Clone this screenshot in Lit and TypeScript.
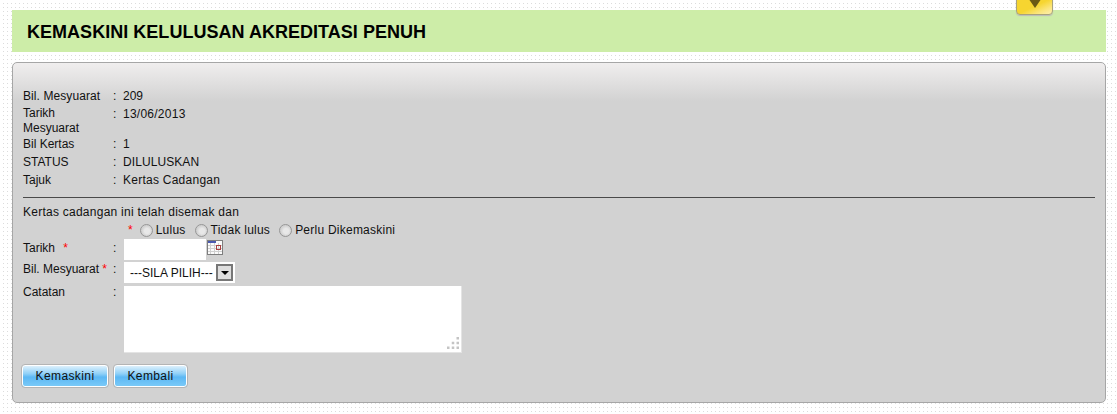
import { LitElement, html, css, svg } from "lit";
import { customElement } from "lit/decorators.js";

@customElement("app-root")
export class AppRoot extends LitElement {
  static styles = css`
    :host {
      display: block;
      width: 1117px;
      height: 414px;
      position: relative;
      overflow: hidden;
      box-sizing: border-box;
      padding: 10px 11px 0 12px;
      background-color: #fff;
      background-image: linear-gradient(90deg, #fff 3px, transparent 3px), linear-gradient(#fff 3px, #dcdcdc 3px);
      background-size: 4px 4px;
      font: 12px/18px "Liberation Sans", Arial, sans-serif;
      color: #111;
    }
    .tab {
      position: absolute;
      left: 1016px;
      top: -6px;
      width: 37px;
      height: 21px;
      box-sizing: border-box;
      border: 1px solid #a8a27c;
      border-radius: 0 0 4px 4px;
      box-shadow: 0 1px 1px #bbb;
      background: linear-gradient(155deg, #f6d530 55%, #fbe680 80%, #fdf0b0);
      display: flex;
      justify-content: center;
    }
    .tab svg { margin-top: 5px; }
    .title {
      height: 42px;
      background: #cdeda8;
      display: flex;
      align-items: center;
      padding: 1px 0 0 15px;
      box-sizing: border-box;
      font-size: 18px;
      font-weight: bold;
      letter-spacing: 0.03px;
      color: #000;
    }
    .panel {
      margin-top: 10px;
      height: 341px;
      box-sizing: border-box;
      border: 1px solid #a6a6a6;
      border-radius: 5px;
      background: linear-gradient(#f0eeee, #d2d2d2 38px);
      padding: 24px 10px 0 10px;
    }
    .info {
      display: grid;
      grid-template-columns: 90px 10px 1fr;
      grid-template-rows: 18px 30px 18px 18px 18px;
    }
    .wrap { width: 70px; line-height: 15px; padding-top: 1px; box-sizing: border-box; }
    .ls { letter-spacing: 0.25px; }
    .lss { letter-spacing: 0.08px; }
    hr {
      margin: 8px 0 5px;
      border: 0;
      border-top: 1px solid #4a4a4a;
      height: 0;
    }
    .intro { height: 18px; }
    .radios {
      display: flex;
      align-items: center;
      height: 18px;
      margin-left: 105px;
    }
    .star { color: #f00; }
    .radios .star { margin-right: 7px; }
    .tstar { margin-left: 5px; }
    .radio {
      width: 13px;
      height: 13px;
      box-sizing: border-box;
      border-radius: 50%;
      border: 1px solid #969696;
      background: radial-gradient(circle at 55% 55%, #e8e8e8 0 30%, #cfcfcf 65%, #f2f2f2);
      margin-right: 3px;
    }
    .opt { margin-right: 9px; letter-spacing: 0.24px; display: flex; align-items: center; }
    .form {
      display: grid;
      grid-template-columns: 90px 11px 1fr;
      row-gap: 2px;
      align-items: start;
    }
    .row-label { line-height: 18px; white-space: nowrap; }
    .up { margin-top: -2px; }
    .date { display: flex; align-items: flex-start; }
    .input {
      width: 82px;
      height: 21px;
      background: #fff;
      margin-right: 1px;
    }
    .cal { margin-top: 1px; }
    .sel {
      width: 111px;
      height: 21px;
      background: #fff;
      box-sizing: border-box;
      display: flex;
      align-items: center;
      padding-left: 6px;
      white-space: nowrap;
    }
    .sel span { width: 86px; }
    .arrow {
      width: 17px;
      height: 17px;
      box-sizing: border-box;
      border: 2px solid #777;
      background: #dedede;
      display: flex;
      align-items: center;
      justify-content: center;
    }
    .area {
      width: 338px;
      height: 67px;
      margin-top: 1px;
      background: #fff;
      border-right: 1px solid #e4e4e4;
      border-bottom: 1px solid #e4e4e4;
      box-sizing: border-box;
      position: relative;
    }
    .grip { position: absolute; right: 2px; bottom: 3px; }
    .buttons { display: flex; gap: 4px; margin-top: 11px; margin-left: -2px; }
    .btn {
      height: 24px;
      box-sizing: border-box;
      border: 1px solid #b4b4b4;
      border-radius: 4px;
      box-shadow: inset 0 0 0 1px #fff;
      background: linear-gradient(#e6f4fd 0, #8fd0f7 40%, #5cb8f4 55%, #7dcbf8 100%);
      display: flex;
      align-items: center;
      justify-content: center;
      color: #111;
      letter-spacing: 0.4px;
    }
    .b1 { width: 88px; }
    .b2 { width: 75px; }
  `;

  render() {
    const pos = [0, 4.75, 9.5];
    const grip = [[2, 0], [1, 1], [2, 1], [0, 2], [1, 2], [2, 2]];
    return html`
      <div class="tab">
        <svg width="12" height="8" viewBox="0 0 12 8"><path d="M0.5 0H11.5L6 8Z" fill="#6b5a14"/></svg>
      </div>
      <div class="title">KEMASKINI KELULUSAN AKREDITASI PENUH</div>
      <div class="panel">
        <div class="info">
          <div class="lss">Bil. Mesyuarat</div><div>:</div><div>209</div>
          <div class="wrap">Tarikh Mesyuarat</div><div>:</div><div class="ls">13/06/2013</div>
          <div>Bil Kertas</div><div>:</div><div>1</div>
          <div>STATUS</div><div>:</div><div class="lss">DILULUSKAN</div>
          <div>Tajuk</div><div>:</div><div class="ls">Kertas Cadangan</div>
        </div>
        <hr />
        <div class="intro ls">Kertas cadangan ini telah disemak dan</div>
        <div class="radios">
          <span class="star">*</span>
          <span class="opt"><span class="radio"></span>Lulus</span>
          <span class="opt"><span class="radio"></span>Tidak lulus</span>
          <span class="opt"><span class="radio"></span>Perlu Dikemaskini</span>
        </div>
        <div class="form">
          <div class="row-label">Tarikh <span class="star tstar">*</span></div><div class="row-label">:</div>
          <div class="date"><div class="input"></div>
            <svg class="cal" width="16" height="15" viewBox="0 0 16 15">
              <rect width="16" height="15" fill="#fbfbfb"/>
              <path d="M0 5.5H15M0 8.5H15M0 11.5H15M3.5 3V15M7.5 3V15M11.5 3V15" stroke="#d0d0d0" fill="none"/>
              <path d="M0 0.5H16M15.5 0V15M0 14.5H16M0.5 0V15" stroke="#7e7e7e" fill="none"/>
              <rect x="1" y="1" width="8" height="2" fill="#4a5ab0"/>
              <rect x="9.5" y="5.5" width="4" height="4" fill="none" stroke="#a84040"/>
            </svg>
          </div>
          <div class="row-label up">Bil. Mesyuarat <span class="star">*</span></div><div class="row-label up">:</div>
          <div class="sel"><span>---SILA PILIH---</span>
            <div class="arrow"><svg width="8" height="4" viewBox="0 0 8 4"><path d="M0 0H8L4 4Z" fill="#000"/></svg></div>
          </div>
          <div class="row-label up">Catatan</div><div class="row-label up">:</div>
          <div class="area">
            <svg class="grip" width="12" height="12" viewBox="0 0 12 12">
              ${grip.map(([c, r]) => svg`<rect x=${pos[c]} y=${pos[r]} width="2.5" height="2.5" fill="#c4c4c4"/>`)}
            </svg>
          </div>
        </div>
        <div class="buttons">
          <div class="btn b1">Kemaskini</div>
          <div class="btn b2">Kembali</div>
        </div>
      </div>
    `;
  }
}
